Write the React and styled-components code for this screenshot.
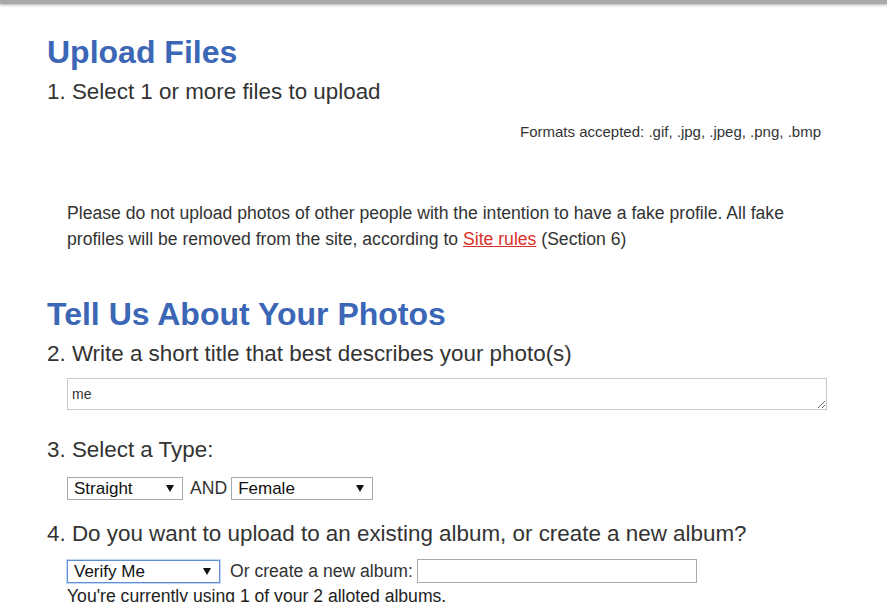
import React from "react";
import styled, { createGlobalStyle } from "styled-components";

const Global = createGlobalStyle`
  html, body { margin: 0; padding: 0; background: #fff; }
  body { font-family: "Liberation Sans", Arial, sans-serif; color: #333; }
`;

const TopBar = styled.div`
  height: 4px;
  background: #a9a9a9;
  box-shadow: 0 1px 3px rgba(120, 120, 120, 0.6);
`;

const Page = styled.div`
  padding: 0 40px 0 47px;
`;

const Heading = styled.h1`
  margin: ${(p) => p.$top}px 0 0;
  font-size: 32px;
  line-height: 36px;
  font-weight: bold;
  color: #3b67b6;
`;

const Step = styled.h2`
  margin: ${(p) => p.$top}px 0 0;
  font-size: 22.4px;
  line-height: 26px;
  font-weight: normal;
  color: #333;
`;

const Formats = styled.div`
  margin-top: 18px;
  padding-right: 26px;
  text-align: right;
  font-size: 15px;
  line-height: 18px;
  color: #333;
`;

const Notice = styled.p`
  margin: 59px 0 0;
  padding-left: 20px;
  width: 760px;
  font-size: 17.6px;
  line-height: 26px;
  color: #333;
`;

const RuleLink = styled.a`
  color: #d9302a;
  text-decoration: underline;
`;

const Indent = styled.div`
  margin-top: ${(p) => p.$top}px;
  padding-left: 20px;
`;

const TitleArea = styled.textarea`
  display: block;
  box-sizing: border-box;
  width: 760px;
  height: 32px;
  margin: 0;
  padding: 7px 4px 5px;
  border: 1px solid #c8c8c8;
  font-family: "Liberation Sans", Arial, sans-serif;
  font-size: 14px;
  line-height: 16px;
  color: #333;
  resize: both;
  outline: none;
`;

const Row = styled.div`
  display: flex;
  align-items: center;
  gap: 4px;
  font-size: 17.6px;
  color: #333;
`;

const SelectBox = styled.div`
  box-sizing: border-box;
  width: ${(p) => p.$w}px;
  height: 23px;
  display: flex;
  align-items: center;
  justify-content: space-between;
  padding: 0 8px 0 6px;
  background: #fff;
  border: 1px solid ${(p) => (p.$focus ? "#5c8fd8" : "#a9a9a9")};
  box-shadow: ${(p) => (p.$focus ? "0 0 0 1px rgba(92,143,216,0.35)" : "none")};
  font-size: 17px;
  color: #111;
  line-height: 21px;
`;

const Arrow = styled.span`
  width: 0;
  height: 0;
  border-left: 4px solid transparent;
  border-right: 4px solid transparent;
  border-top: 7px solid #111;
`;

const Label = styled.span`
  margin-left: ${(p) => p.$ml || 0}px;
  line-height: 21px;
`;

const TextInput = styled.input`
  box-sizing: border-box;
  width: 280px;
  height: 24px;
  margin: 0;
  border: 1px solid #a9a9a9;
  padding: 2px 4px;
  font-family: "Liberation Sans", Arial, sans-serif;
  font-size: 15px;
  outline: none;
`;

const Usage = styled.div`
  margin-top: 3px;
  padding-left: 20px;
  font-size: 17.6px;
  line-height: 20px;
  color: #222;
`;

export default function App() {
  return (
    <>
      <Global />
      <TopBar />
      <Page>
        <Heading $top={30}>Upload Files</Heading>
        <Step $top={9}>1. Select 1 or more files to upload</Step>
        <Formats>Formats accepted: .gif, .jpg, .jpeg, .png, .bmp</Formats>
        <Notice>
          Please do not upload photos of other people with the intention to have a fake
          profile. All fake profiles will be removed from the site, according to{" "}
          <RuleLink href="#">Site rules</RuleLink> (Section 6)
        </Notice>

        <Heading $top={44}>Tell Us About Your Photos</Heading>
        <Step $top={9}>2. Write a short title that best describes your photo(s)</Step>
        <Indent $top={11}>
          <TitleArea defaultValue="me" />
        </Indent>

        <Step $top={27}>3. Select a Type:</Step>
        <Indent $top={14}>
          <Row>
            <SelectBox $w={116}>
              <span>Straight</span>
              <Arrow />
            </SelectBox>
            <Label $ml={3}>AND</Label>
            <SelectBox $w={142}>
              <span>Female</span>
              <Arrow />
            </SelectBox>
          </Row>
        </Indent>

        <Step $top={21}>4. Do you want to upload to an existing album, or create a new album?</Step>
        <Indent $top={12}>
          <Row>
            <SelectBox $w={153} $focus>
              <span>Verify Me</span>
              <Arrow />
            </SelectBox>
            <Label $ml={6}>Or create a new album:</Label>
            <TextInput type="text" />
          </Row>
        </Indent>
        <Usage>You're currently using 1 of your 2 alloted albums.</Usage>
      </Page>
    </>
  );
}
